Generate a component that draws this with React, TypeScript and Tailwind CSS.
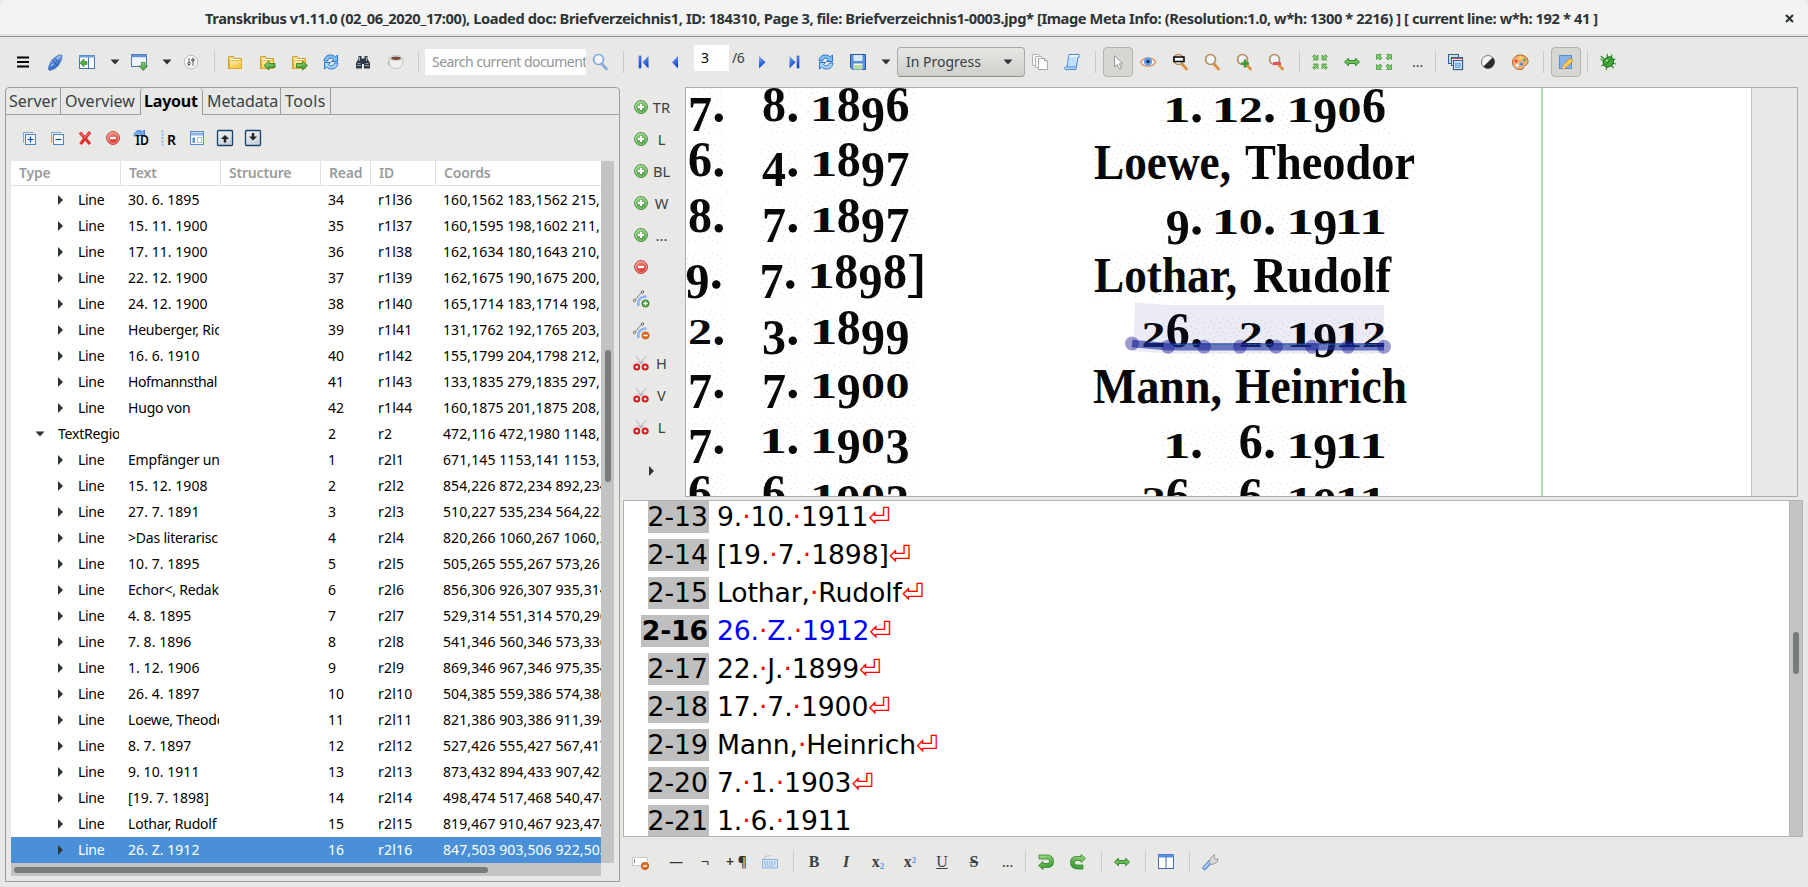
import type { ReactNode } from 'react';

const Svg = ({ children, w = 18, h = 18 }: { children: ReactNode; w?: number; h?: number }) => (
  <svg width={w} height={h} viewBox={`0 0 ${w} ${h}`} fill="none" className="block shrink-0">
    {children}
  </svg>
);

const Gradient = ({ id, from, to }: { id: string; from: string; to: string }) => (
  <linearGradient id={id} x1="0" y1="0" x2="0.4" y2="1">
    <stop offset="0" stopColor={from} />
    <stop offset="1" stopColor={to} />
  </linearGradient>
);

const Defs = () => (
  <svg width="0" height="0" className="absolute">
    <defs>
      <Gradient id="green" from="#a6dd8e" to="#3f9a36" />
      <Gradient id="red" from="#f79a8c" to="#d8342c" />
      <Gradient id="blue" from="#9cc4f5" to="#2a5fc4" />
      <Gradient id="nav" from="#7fb0ff" to="#0a3fd0" />
      <Gradient id="folder" from="#fff3b8" to="#f2c53d" />
      <Gradient id="pane" from="#ffffff" to="#b9d3f2" />
      <Gradient id="box" from="#f4f4f4" to="#c9d3de" />
    </defs>
  </svg>
);

const Sep = () => <div className="h-[22px] w-px shrink-0 bg-[#c9c9c6]" />;
const Caret = () => (
  <Svg w={10} h={6}>
    <path d="M0.5 0.5h9L5 5.5z" fill="#2e3436" />
  </Svg>
);
const Burger = () => (
  <Svg>
    <path d="M3 4.500h12M3 9h12M3 13.500h12" stroke="#000" strokeWidth="2.200" />
  </Svg>
);
const Plug = () => (
  <Svg>
    <path d="M2 16l2.500-7 3-3.500 5-3.500h3.500l-.5 5-3 5.500-3.500 3-5 2z" fill="url(#blue)" stroke="#4f7fc0" strokeWidth="0.8" />
    <path d="M6 6.500l5.500 6M8.500 5l5 5" stroke="#2c5a98" />
    <path d="M11 6l3.500-3M5 13l2-2" stroke="#cfe2fb" />
  </Svg>
);
const PanelLeft = () => (
  <Svg>
    <rect x="1.5" y="2.500" width="15" height="13" fill="#f7fafe" stroke="#4678b4" />
    <path d="M1 3.500h16" stroke="#6fa0dc" strokeWidth="2" />
    <path d="M10.500 4v12" stroke="#4678b4" />
    <path d="M2 10l4-4v2.500h3v3H6V14z" fill="#4caf3e" stroke="#2b7d22" strokeWidth="0.6" />
  </Svg>
);
const WindowDown = () => (
  <Svg>
    <rect x="1.500" y="1.500" width="15" height="12" fill="#eef4fc" stroke="#4678b4" />
    <path d="M1 3h16" stroke="#5f93d4" strokeWidth="2.500" />
    <path d="M11.500 9.500h3.500v3.500h2.500L13.200 17.500 9 13h2.500z" fill="url(#green)" stroke="#2b7d22" strokeWidth="0.700" />
  </Svg>
);
const Sliders = () => (
  <Svg>
    <circle cx="9" cy="9" r="6.800" fill="#f5f5f5" stroke="#bdbdbd" />
    <path d="M7 5v8M11 5v8" stroke="#666" />
    <circle cx="7" cy="10.500" r="1.200" fill="#f5f5f5" stroke="#444" />
    <circle cx="11" cy="7" r="1.200" fill="#f5f5f5" stroke="#444" />
  </Svg>
);
const FolderShape = () => (
  <>
    <path d="M2.500 3.500h5l1 2h7v10h-13z" fill="#f5dc7c" stroke="#cf9c24" />
    <path d="M3.500 7.500h12v8h-12z" fill="url(#folder)" stroke="#d9a92e" strokeWidth="0.700" />
    <path d="M5 6.500h9" stroke="#fff" />
  </>
);
const Folder = () => (
  <Svg>
    <FolderShape />
  </Svg>
);
const FolderIn = () => (
  <Svg>
    <FolderShape />
    <path d="M6 12.500L11 8v2.500h6v4H11V17z" fill="url(#green)" stroke="#2b7d22" strokeWidth="0.800" />
  </Svg>
);
const FolderOut = () => (
  <Svg>
    <FolderShape />
    <path d="M17.500 12.500L12.500 8v2.500H6.500v4h6V17z" fill="url(#green)" stroke="#2b7d22" strokeWidth="0.800" />
  </Svg>
);
const Refresh = () => (
  <Svg>
    <path d="M2 8c.5-4 3-6 6.500-6 2 0 3.500.7 4.700 2L15.500 2v6.500H9.500l2-2c-2-2.200-5.500-1.500-6 1.500z" fill="#7fc0f8" stroke="#1c68c4" strokeWidth="0.900" />
    <path d="M16 10c-.5 4-3 6-6.500 6-2 0-3.500-.7-4.700-2L2.500 16V9.500h6l-2 2c2 2.200 5.500 1.500 6-1.500z" fill="#a4d4fb" stroke="#1c68c4" strokeWidth="0.900" />
  </Svg>
);
const Binoculars = () => (
  <Svg>
    <path d="M4.500 3h3v2.500h3V3h3v3l2.500 4v5.500h-6V11H8v4.500H2V10l2.500-4z" fill="#2f3a46" />
    <path d="M3 12.500h4M11 12.500h4M5.500 4v4M12.500 4v4M3.500 10.500h3M11.500 10.500h3" stroke="#8fa4b8" />
  </Svg>
);
const Cup = () => (
  <Svg>
    <path d="M3 5.500c0 6 1 10 7 10s7-4 7-10z" fill="#efefef" stroke="#c4c4c4" />
    <path d="M4 8.500c-3-.5-3 3.500 1 4" stroke="#c9c9c9" strokeWidth="1.300" />
    <ellipse cx="10" cy="5" rx="6.500" ry="2.600" fill="#e9e4e1" stroke="#cfcac7" />
    <ellipse cx="10" cy="5.200" rx="4.800" ry="1.700" fill="#7a4a35" />
  </Svg>
);
const Lens = ({ ring, handle, children }: { ring: string; handle: string; children?: ReactNode }) => (
  <Svg>
    <path d="M11 11l4.500 5" stroke={handle} strokeWidth="2.800" strokeLinecap="round" />
    <circle cx="7.500" cy="6.500" r="5" fill="#f1f4f8" stroke={ring} strokeWidth="1.600" />
    {children}
  </Svg>
);
const First = () => (
  <Svg>
    <rect x="4" y="3" width="2" height="12" fill="url(#nav)" stroke="#1c4cc8" strokeWidth="0.600" />
    <path d="M13.500 3v12.500L7.500 9.200z" fill="url(#nav)" />
  </Svg>
);
const Prev = () => (
  <Svg>
    <path d="M12 3v12.500L6 9.200z" fill="url(#nav)" />
  </Svg>
);
const Next = () => (
  <Svg>
    <path d="M6 3v12.500l6.500-6.300z" fill="url(#nav)" />
  </Svg>
);
const Last = () => (
  <Svg>
    <rect x="12" y="3" width="2" height="12" fill="url(#nav)" stroke="#1c4cc8" strokeWidth="0.600" />
    <path d="M4.500 3v12.500l6-6.300z" fill="url(#nav)" />
  </Svg>
);
const Save = () => (
  <Svg>
    <path d="M1.500 1.500h15v15h-13l-2-2z" fill="#5b8fdc" stroke="#2a56a8" />
    <rect x="4.500" y="2" width="9" height="6" fill="#dce9fa" />
    <rect x="4.500" y="10.500" width="9" height="6" fill="#f2f7ee" />
    <path d="M5 13h8M5 15h8" stroke="#7cc04c" strokeWidth="1.200" />
  </Svg>
);
const Copy = () => (
  <Svg>
    <path d="M1.500 1.500h6l2.500 2.500v8.500H1.500z" fill="#fafafa" stroke="#b4b4b4" />
    <path d="M4.500 3.500h6L13 6v8.500H4.500z" fill="#fafafa" stroke="#b4b4b4" />
    <path d="M7.500 5.500h6L16.500 8v8.500h-9z" fill="#fff" stroke="#a8a8a8" />
    <path d="M13.500 5.500V8h3" stroke="#a8a8a8" />
  </Svg>
);
const Scroll = () => (
  <Svg>
    <path d="M6 1.500h10c1 0 1 2.500 0 2.500h-1l-2 12.500H2.500c-1.500 0-1-2.500 0-2.500H4z" fill="url(#pane)" stroke="#4a8ad4" />
    <path d="M4 14h8.500" stroke="#4a8ad4" />
    <path d="M6.500 4l-1.500 9h7L13.500 4z" fill="#bfe0fb" />
  </Svg>
);
const Cursor = () => (
  <Svg>
    <path d="M5.500 2.500v11.500l2.800-2.500 2 4.500 2-1-2-4.200H14z" fill="#fbfbfb" stroke="#9a9a9a" />
  </Svg>
);
const Eye = () => (
  <Svg>
    <path d="M1.500 9C4 4.500 14 3.500 16.500 9 14 14.500 4 14.500 1.500 9z" fill="#fff" stroke="#d9946c" strokeWidth="1.500" />
    <circle cx="9" cy="8.500" r="4" fill="#5c9ce6" />
    <circle cx="9" cy="8.500" r="1.600" fill="#0d2350" />
  </Svg>
);
const CornerArrows = ({ out }: { out?: boolean }) => (
  <Svg>
    {[0, 90, 180, 270].map((a) => (
      <g key={a} transform={`rotate(${a} 9 9)`}>
        <path
          d={out ? 'M1.500 1.500h5L5 3l2 2-2 2-2-2-1.500 1.500z' : 'M7 7H2l1.500-1.500-2-2 2-2 2 2L7 2z'}
          fill="#7cc76a"
          stroke="#3d9432"
          strokeWidth="0.700"
        />
      </g>
    ))}
  </Svg>
);
const FitWidth = () => (
  <Svg>
    <path d="M1.500 9L5.500 5v2.500h7V5l4 4-4 4v-2.500h-7V13z" fill="#6cbb5a" stroke="#2e8526" strokeWidth="0.900" />
  </Svg>
);
const Windows = () => (
  <Svg>
    <rect x="1.500" y="1.500" width="10" height="9" fill="#c8e6c0" stroke="#335f9c" />
    <rect x="4.500" y="4.500" width="11" height="8" fill="#fff" stroke="#335f9c" />
    <path d="M5 5.500h10" stroke="#d2504a" />
    <rect x="6.500" y="7.500" width="9" height="9" fill="#f4f8fd" stroke="#335f9c" strokeWidth="1.300" />
    <rect x="8.500" y="10" width="5" height="4.500" fill="#8ec2f2" stroke="#5a8cc8" strokeWidth="0.600" />
  </Svg>
);
const Contrast = () => (
  <Svg>
    <circle cx="9" cy="9" r="6.500" fill="#f4f4f4" stroke="#777" />
    <path d="M13.600 4.400A6.500 6.500 0 014.400 13.600z" fill="#2b2b2b" />
  </Svg>
);
const Palette = () => (
  <Svg>
    <path d="M9 2c5 0 8 3 8 6.500 0 4-3 3.500-4 4.500s.500 3-3 3.500C5 17 1.500 13.500 1.500 9.500S4.500 2 9 2z" fill="#f0b07a" stroke="#b5622a" />
    <circle cx="5" cy="8" r="1.500" fill="#e04432" />
    <circle cx="9.500" cy="5" r="1.500" fill="#f6e04c" />
    <circle cx="13.500" cy="7" r="1.500" fill="#58b04a" />
    <circle cx="6" cy="12.500" r="1.400" fill="#fff" />
    <circle cx="10.500" cy="11" r="1.600" fill="#4d86d8" />
  </Svg>
);
const EditPage = () => (
  <Svg>
    <rect x="2.500" y="2.500" width="12" height="13" fill="#86b4ec" stroke="#5a8cd0" />
    <path d="M5 16l1-4 7-7 3 3-7 7z" fill="#f6c95c" stroke="#b98322" strokeWidth="0.800" />
    <path d="M5 16l1-3.500 2.500 2.500z" fill="#fff" stroke="#b98322" strokeWidth="0.500" />
  </Svg>
);
const Bug = () => (
  <Svg>
    <path d="M2 3l4 4M8 1l1 4M13 1.500L12 5M16.500 6L13 7.500M17 11l-4-1M14.500 15L12 12M3 9h3M2 13l4-2M7 17l1-4M1.500 6L5 8" stroke="#2f8f2c" strokeWidth="1.200" />
    <ellipse cx="9.500" cy="9" rx="5.600" ry="4.600" transform="rotate(-45 9.500 9)" fill="#43a83c" stroke="#1f6d1d" />
    <path d="M6.500 12l6-6" stroke="#1f6d1d" />
    <circle cx="8" cy="7.500" r="1" fill="#b5e8ae" />
  </Svg>
);
const BoxSign = ({ plus }: { plus?: boolean }) => (
  <Svg>
    <path d="M3.500 13.500v-10h10" stroke="#7ea6cf" />
    <rect x="5.500" y="5.500" width="10" height="10" fill="#f2f8fe" stroke="#4f86bd" />
    <path d={plus ? 'M7.500 10.500h6M10.500 7.500v6' : 'M7.500 10.500h6'} stroke="#1c4e88" strokeWidth="1.200" />
  </Svg>
);
const RedCross = () => (
  <Svg>
    <path d="M4 3.500l10 11.500M14 3L4.500 15" stroke="#e03030" strokeWidth="3.200" />
    <path d="M4.500 4l4.500 4.500L13 4" stroke="#f48a80" strokeWidth="1" />
  </Svg>
);
const Round = ({ kind }: { kind: 'plus' | 'minus' }) => (
  <Svg>
    <circle cx="9" cy="9" r="6.400" fill={kind === 'plus' ? 'url(#green)' : 'url(#red)'} stroke={kind === 'plus' ? '#3d8f35' : '#c23a34'} />
    <circle cx="9" cy="9" r="5.400" stroke="#fff" strokeOpacity="0.450" />
    <path d={kind === 'plus' ? 'M9 6v6M6 9h6' : 'M6 9h6'} stroke="#fff" strokeWidth="2.200" />
  </Svg>
);
const LetterIcon = ({ text }: { text: 'ID' | 'R' }) => (
  <Svg>
    {text === 'ID' ? (
      <path d="M2 7c.5-4 3-6 6-5.500l2.500 1L12.500 1v5.500H7.500l1.500-2c-2-.8-3.500.5-4 2.500z" fill="#6ab0f3" stroke="#1c68c4" strokeWidth="0.700" />
    ) : (
      <path d="M2.500 1.500v15" stroke="#8ab8e4" strokeWidth="2" strokeDasharray="2 1.300" />
    )}
    <text x={text === 'ID' ? 3.500 : 7} y="15.500" fontFamily="Noto Sans, sans-serif" fontSize="14" fontWeight="600" fill="#000" textLength={text === 'ID' ? 13.500 : 9} lengthAdjust="spacingAndGlyphs">
      {text}
    </text>
  </Svg>
);
const Layout = () => (
  <Svg>
    <rect x="2.500" y="2.500" width="13" height="13" fill="#fff" stroke="#5c8cd0" />
    <path d="M3 5h12" stroke="#8db4ea" strokeWidth="3" />
    <rect x="4.500" y="8.500" width="2.500" height="5.500" fill="#5c8cd0" />
    <rect x="9.500" y="8.500" width="4" height="5" stroke="#a8c6ee" />
  </Svg>
);
const BoxArrow = ({ down }: { down?: boolean }) => (
  <Svg>
    <rect x="1.500" y="1.500" width="15" height="15" rx="1" fill="url(#box)" stroke="#16406e" strokeWidth="1.300" />
    <path
      d={down ? 'M7.800 4v3.500H5l4 4 4-4h-2.800V4z' : 'M7.800 13.500V10H5l4-4 4 4h-2.800v3.500z'}
      fill="#222"
    />
  </Svg>
);
const Curve = ({ plus }: { plus?: boolean }) => (
  <Svg>
    <path d="M6.500 16c-1-6 1-9 8-9.500" stroke="#8cb6ee" strokeWidth="2.500" />
    <path d="M3 10l7-8" stroke="#777" />
    <circle cx="2.500" cy="10.500" r="1.200" fill="#eee" stroke="#666" />
    <circle cx="10.500" cy="2" r="1.200" fill="#eee" stroke="#666" />
    <circle cx="13.500" cy="13.500" r="3.600" fill={plus ? '#4a9a2e' : '#e8681c'} stroke={plus ? '#2f6f1c' : '#b84a0c'} strokeWidth="0.700" />
    <path d={plus ? 'M13.500 11.300v4.400M11.300 13.500h4.400' : 'M11.300 13.500h4.400'} stroke="#fff" strokeWidth="1.400" />
  </Svg>
);
const Scissors = () => (
  <Svg>
    <path d="M4 2l6.500 8.500M14 2L7.500 10.500" stroke="#cdd0d1" strokeWidth="1.800" />
    <path d="M7 7.500l2 2 2-2" stroke="#999" />
    <circle cx="4.800" cy="13" r="2.500" stroke="#e3141c" strokeWidth="2" />
    <circle cx="13.200" cy="13" r="2.500" stroke="#e3141c" strokeWidth="2" />
  </Svg>
);
const FieldRemove = () => (
  <Svg>
    <rect x="1.500" y="4.500" width="15" height="8" fill="#fff" stroke="#c8c8c4" />
    <path d="M3.500 6v4" stroke="#888" />
    <circle cx="14" cy="13" r="3.700" fill="#e8681c" stroke="#b84a0c" strokeWidth="0.700" />
    <path d="M12 13h4" stroke="#fff" strokeWidth="1.400" />
  </Svg>
);
const Keyboard = () => (
  <Svg>
    <path d="M3.500 6c0-4 2-2.500 7-3.500" stroke="#c0c0c0" />
    <path d="M1.500 6.500h15v8.500h-15z" fill="#dbe8f8" stroke="#8cb0e0" />
    <path d="M3 9h12M3 11h12M4 13h10" stroke="#6f98d0" strokeDasharray="1.500 1" />
  </Svg>
);
const UndoRedo = ({ flip }: { flip?: boolean }) => (
  <Svg>
    <g transform={flip ? 'matrix(-1 0 0 1 18 0)' : undefined}>
      <path
        d={flip ? 'M6 1.500v2h4c5 0 6.500 2.500 6.500 6s-2 6.500-7 6.500H4v-4h6c2 0 2.500-1 2.500-2.300S12 7.500 10 7.500H6v2L1.500 5.500z' : 'M6 16.500v-2h4c5 0 6.500-2.500 6.500-6S14.500 2 9.500 2H2v4h8c2 0 2.500 1 2.500 2.300S12 10.500 10 10.500H6v-2L1.500 12.500z'}
        fill="url(#green)"
        stroke="#2e8526"
        strokeWidth="0.800"
      />
    </g>
  </Svg>
);
const TwoColumns = () => (
  <Svg>
    <rect x="1.500" y="1.500" width="15" height="14" fill="#fff" stroke="#3f6db4" />
    <path d="M1 3h16" stroke="#5b8fdc" strokeWidth="3" />
    <path d="M9 3v13" stroke="#3f6db4" />
  </Svg>
);
const Wrench = () => (
  <Svg>
    <path d="M3.500 15l5.500-6" stroke="#5c8cdc" strokeWidth="4.400" strokeLinecap="round" />
    <path d="M3.500 14.800l5-5.400" stroke="#b4d0f8" strokeWidth="2" strokeLinecap="round" />
    <path d="M8 9.500l2-5 3.500-3-.5 3.500 2 1.500 2-1-.8 3.500-4 2-1.800.5z" fill="#d9d9d9" stroke="#8a8a8a" strokeWidth="0.800" />
  </Svg>
);
const Amber = ({ children }: { children?: ReactNode }) => (
  <Lens ring="#b58a5c" handle="#d8923c">
    {children}
  </Lens>
);

type Entry = [string, string, string, string, 'open'?];
const entries: Entry[] = [
  ['30. 6. 1895', '34', 'r1l36', '160,1562 183,1562 215,1562'],
  ['15. 11. 1900', '35', 'r1l37', '160,1595 198,1602 211,1602'],
  ['17. 11. 1900', '36', 'r1l38', '162,1634 180,1643 210,1643'],
  ['22. 12. 1900', '37', 'r1l39', '162,1675 190,1675 200,1675'],
  ['24. 12. 1900', '38', 'r1l40', '165,1714 183,1714 198,1714'],
  ['Heuberger, Richard', '39', 'r1l41', '131,1762 192,1765 203,1765'],
  ['16. 6. 1910', '40', 'r1l42', '155,1799 204,1798 212,1798'],
  ['Hofmannsthal', '41', 'r1l43', '133,1835 279,1835 297,1835'],
  ['Hugo von', '42', 'r1l44', '160,1875 201,1875 208,1875'],
  ['', '2', 'r2', '472,116 472,1980 1148,1980', 'open'],
  ['Empfänger und', '1', 'r2l1', '671,145 1153,141 1153,141'],
  ['15. 12. 1908', '2', 'r2l2', '854,226 872,234 892,234'],
  ['27. 7. 1891', '3', 'r2l3', '510,227 535,234 564,222'],
  ['>Das literarisc', '4', 'r2l4', '820,266 1060,267 1060,267'],
  ['10. 7. 1895', '5', 'r2l5', '505,265 555,267 573,261'],
  ['Echor<, Redak', '6', 'r2l6', '856,306 926,307 935,314'],
  ['4. 8. 1895', '7', 'r2l7', '529,314 551,314 570,296'],
  ['7. 8. 1896', '8', 'r2l8', '541,346 560,346 573,336'],
  ['1. 12. 1906', '9', 'r2l9', '869,346 967,346 975,354'],
  ['26. 4. 1897', '10', 'r2l10', '504,385 559,386 574,386'],
  ['Loewe, Theodor', '11', 'r2l11', '821,386 903,386 911,394'],
  ['8. 7. 1897', '12', 'r2l12', '527,426 555,427 567,417'],
  ['9. 10. 1911', '13', 'r2l13', '873,432 894,433 907,423'],
  ['[19. 7. 1898]', '14', 'r2l14', '498,474 517,468 540,474'],
  ['Lothar, Rudolf', '15', 'r2l15', '819,467 910,467 923,474'],
  ['26. Z. 1912', '16', 'r2l16', '847,503 903,506 922,503'],
];
const columns = 'grid grid-cols-[110px_100px_100px_50px_65px_165px]';

const textSpacing = (text: string) => {
  if (text === 'Hofmannsthal') return 'tracking-[-0.4px]';
  if (/[a-z]{3}/.test(text)) return 'tracking-[-0.2px]';
  return 'tracking-[0.06px]';
};

const Row = ({ entry, selected }: { entry: Entry; selected: boolean }) => {
  const [text, read, id, coords, open] = entry;
  return (
    <div className={`${columns} h-[26px] items-center text-sm leading-[26px] ${selected ? 'bg-[#4a90d9] text-white' : 'text-black'}`}>
      {open ? (
        <div className="mr-0.5 flex items-center overflow-hidden pl-6">
          <Caret />
          <span className="pl-[13px] tracking-[-0.2px]">TextRegion</span>
        </div>
      ) : (
        <div className="flex items-center pl-[47px]">
          <Svg w={5} h={10}>
            <path d="M0 0l5 5-5 5z" fill="#2e3436" />
          </Svg>
          <span className="pl-[15px] tracking-[-0.3px]">Line</span>
        </div>
      )}
      <div className={`ml-[7px] mr-0.5 overflow-hidden whitespace-nowrap ${textSpacing(text)}`}>{text}</div>
      <div />
      <div className="pl-[7px]">{read}</div>
      <div className="pl-[7px] tracking-[0.2px]">{id}</div>
      <div className="overflow-hidden whitespace-nowrap pl-[7px] tracking-[0.1px]">{coords}</div>
    </div>
  );
};

const Tree = () => (
  <div className="ml-[5px] mt-[24px] grid w-[603px] grid-cols-[590px_13px] grid-rows-[702px_13px]">
    <div className="overflow-hidden bg-white">
      <div className={`${columns} mb-px h-[25px] border-b border-[#e0e0de] text-sm font-semibold leading-[24px] text-[#9a9c9c]`}>
        {['Type', 'Text', 'Structure', 'Read', 'ID', 'Coords'].map((name) => (
          <div key={name} className="border-r border-[#e0e0de] pl-2 tracking-[-0.2px] last:border-r-0">
            {name}
          </div>
        ))}
      </div>
      {entries.map((entry, i) => (
        <Row key={entry[2]} entry={entry} selected={i === entries.length - 1} />
      ))}
    </div>
    <div className="bg-[#c2c4c3] pl-1 pt-[189px]">
      <div className="h-[132px] w-1.5 rounded-full bg-[#777b7a]" />
    </div>
    <div className="bg-[#c2c4c3] pl-[3px] pt-1">
      <div className="h-1.5 w-[474px] rounded-full bg-[#777b7a]" />
    </div>
  </div>
);

const Sidebar = () => (
  <section className="ml-[5px] h-[795px] w-[615px] shrink-0 rounded-t border border-[#9d9f9b]">
    <nav className="flex h-[27px] text-base leading-[26px] text-[#3a4042]">
      <div className="w-[55px] border-b border-r border-[#9d9f9b] pl-[3px]">Server</div>
      <div className="w-[79px] border-b border-[#9d9f9b] pl-1">Overview</div>
      <div className="w-[63px] rounded-t border-x border-[#9d9f9b] pl-[3px] font-bold tracking-[-0.2px] text-black">Layout</div>
      <div className="w-[78px] border-b border-r border-[#9d9f9b] pl-1 tracking-[-0.1px]">Metadata</div>
      <div className="w-[50px] border-b border-r border-[#9d9f9b] pl-1 tracking-[0.4px]">Tools</div>
      <div className="flex-1 border-b border-[#9d9f9b]" />
    </nav>
    <div className="mt-[14px] flex h-[18px] gap-[10px] pl-[14px]">
      <BoxSign plus />
      <BoxSign />
      <RedCross />
      <Round kind="minus" />
      <LetterIcon text="ID" />
      <LetterIcon text="R" />
      <Layout />
      <BoxArrow />
      <BoxArrow down />
    </div>
    <div className="-mt-[10px]">
      <Tree />
    </div>
  </section>
);

const MainToolbar = () => (
  <div className="flex h-[50px] shrink-0 items-center pl-[14px] text-sm text-[#3a4042]">
    <div className="flex items-center gap-[14px]">
      <Burger />
      <Plug />
      <PanelLeft />
      <Caret />
    </div>
    <div className="ml-[10px] flex items-center gap-[14px]">
      <WindowDown />
      <Caret />
    </div>
    <div className="ml-[10px] flex items-center gap-[14px]">
      <Sliders />
      <Sep />
    </div>
    <div className="ml-[11px] flex items-center gap-[14px]">
      <Folder />
      <FolderIn />
      <FolderOut />
      <Refresh />
      <Binoculars />
      <Cup />
      <Sep />
    </div>
    <div className="ml-[6px] h-[26px] w-[161px] overflow-hidden whitespace-nowrap bg-white pl-[7px] leading-[25px] tracking-[-0.53px] text-[#929595]">Search current document...</div>
    <div className="ml-[5px] flex items-center gap-[14px]">
      <Lens ring="#7ba7dc" handle="#8aaede" />
      <Sep />
    </div>
    <div className="ml-[11px] flex items-center gap-[13px]">
      <First />
      <Prev />
    </div>
    <div className="mb-2 ml-[10px] h-[26px] w-[35px] bg-white pl-[7px] leading-[25px] text-black">3</div>
    <div className="mb-2 ml-[3px] w-3 leading-[26px] tracking-[-0.4px]">/6</div>
    <div className="ml-[9px] flex items-center gap-[14px]">
      <Next />
      <Last />
      <Refresh />
      <Save />
      <Caret />
    </div>
    <div className="ml-[6px] flex h-[30px] w-[128px] items-center justify-between rounded border border-[#a9aaa7] border-b-[#8e8f8c] bg-linear-to-b from-[#e6e6e4] to-[#cfcfcc] pl-2 pr-[11px]">
      <span>In Progress</span>
      <Caret />
    </div>
    <div className="ml-[6px] flex items-center gap-[14px]">
      <Copy />
      <Scroll />
      <Sep />
    </div>
    <div className="ml-[7px] flex h-[30px] w-[30px] items-center justify-center rounded border border-[#b4b4b1] bg-[#d6d6d3]">
      <Cursor />
    </div>
    <div className="ml-[6px] flex items-center gap-[14px]">
      <Eye />
      <Amber>
        <rect x="3" y="4" width="10" height="4.500" fill="#fff" fillOpacity="0.600" stroke="#000" strokeWidth="1.500" />
      </Amber>
      <Amber />
      <Amber>
        <path d="M10 6.500v8M6 10.500h8" stroke="#3f9a36" strokeWidth="2.600" />
      </Amber>
      <Amber>
        <path d="M6 10.500h8" stroke="#e8505a" strokeWidth="3" />
      </Amber>
      <Sep />
    </div>
    <div className="ml-[11px] flex items-center gap-[14px]">
      <CornerArrows />
      <FitWidth />
      <CornerArrows out />
    </div>
    <div className="ml-[19px] w-[13px]">...</div>
    <div className="ml-[10px] flex items-center gap-[11px]">
      <Sep />
      <div className="flex items-center gap-[14px]">
        <Windows />
        <Contrast />
        <Palette />
        <Sep />
      </div>
    </div>
    <div className="ml-[7px] flex h-[30px] w-[30px] items-center justify-center rounded border border-[#b4b4b1] bg-[#d6d6d3]">
      <EditPage />
    </div>
    <div className="ml-[6px] flex items-center gap-[11px]">
      <Sep />
      <Bug />
    </div>
  </div>
);

const ShapeTools = () => {
  const tools: [ReactNode, string][] = [
    [<Round kind="plus" />, 'TR'],
    [<Round kind="plus" />, 'L'],
    [<Round kind="plus" />, 'BL'],
    [<Round kind="plus" />, 'W'],
    [<Round kind="plus" />, '...'],
    [<Round kind="minus" />, ''],
    [<Curve plus />, ''],
    [<Curve />, ''],
    [<Scissors />, 'H'],
    [<Scissors />, 'V'],
    [<Scissors />, 'L'],
  ];
  return (
    <div className="flex w-[65px] shrink-0 flex-col pl-3 pt-1">
      {tools.map(([icon, label], i) => (
        <div key={i} className="flex h-8 items-center text-[14.67px] text-[#3a4042]">
          {icon}
          <span className="w-[23px] text-center">{label}</span>
        </div>
      ))}
      <div className="pl-[17px] pt-[23px]">
        <Svg w={5} h={10}>
          <path d="M0 0l5 5-5 5z" fill="#2e3436" />
        </Svg>
      </div>
    </div>
  );
};

/* Old-style numerals: 0, 1, 2 sit at x-height, 3, 4, 5, 7, 9 descend. */
const Numeral = ({ c, x, y }: { c: string; x: number; y: number }) => {
  if (c === '.') return <circle cx={x + 4.500} cy={y - 3.500} r="4.200" />;
  if (c === ']') return <path d={`M${x + 1} ${y - 34}h13v44h-14v-3h8.500v-38.500h-7.500z`} />;
  const small = '012'.includes(c);
  const low = '34579'.includes(c);
  const wide = c === '1';
  return (
    <text
      x={wide ? x - 4 : x - 1}
      y={low ? y + 10 : y}
      fontSize={small ? 35.500 : 50}
      textLength={wide ? 28 : 24}
      lengthAdjust="spacingAndGlyphs"
    >
      {c}
    </text>
  );
};
const Numerals = ({ text, x, y }: { text: string; x: number; y: number }) => (
  <>
    {[...text].map((c, i) => (c === ' ' ? null : <Numeral key={i} c={c} x={x + i * 24.300 + (c === '.' ? 1 : 0)} y={y} />))}
  </>
);
const leftRows: [number, number, string, string, string][] = [
  [689, 121.300, '7.', '8.', '1896'],
  [689, 176, '6.', '4.', '1897'],
  [689, 231.700, '8.', '7.', '1897'],
  [686.500, 288, '9.', '7.', '1898]'],
  [689, 344.300, '2.', '3.', '1899'],
  [689, 397.500, '7.', '7.', '1900'],
  [689, 453.300, '7.', '1.', '1903'],
  [689, 509, '6.', '6.', '1903'],
];
const rightRows: [number, string, string, string][] = [
  [121.700, ' 1.', '12.', '1906'],
  [234, ' 9.', '10.', '1911'],
  [346.700, '26.', ' 2.', '1912'],
  [457.500, ' 1.', ' 6.', '1911'],
  [512, '26.', ' 6.', '1911'],
];
const words: [number, number, number, string][] = [
  [1094, 179.300, 137, 'Loewe,'],
  [1245, 179.300, 170, 'Theodor'],
  [1094, 291.700, 143, 'Lothar,'],
  [1253, 291.700, 138, 'Rudolf'],
  [1093, 402.700, 129, 'Mann,'],
  [1235, 402.700, 172, 'Heinrich'],
];
const handles = [1132, 1168, 1204, 1240, 1276, 1312, 1348, 1384];

const Scan = () => (
  <svg width="1065" height="408" viewBox="686 88 1065 408" className="block shrink-0 bg-white">
    <defs>
      <pattern id="grain" width="17" height="13" patternUnits="userSpaceOnUse">
        <path d="M1 1h1v1h-1zM6 3h1v1h-1zM12 2h1v1h-1zM15 6h1v1h-1zM3 8h1v1h-1zM9 7h1v1h-1zM7 11h1v1h-1zM13 10h1v1h-1z" fill="#dedede" />
      </pattern>
    </defs>
    {leftRows.map(([x, y], i) => (
      <g key={i} fill="url(#grain)">
        <rect x={x} y={y - 36} width="37" height="48" />
        <rect x={x + 72} y={y - 36} width="40" height="48" />
        <rect x={x + 118} y={y - 36} width="108" height="48" />
      </g>
    ))}
    {rightRows.map(([y], i) => (
      <rect key={i} x="1162" y={y - 30} width="228" height="42" fill="url(#grain)" />
    ))}
    {words.map(([x, y, w], i) => (
      <rect key={i} x={x} y={y - 38} width={w} height="44" fill="url(#grain)" />
    ))}
    <g fill="#080808" fontFamily="'Liberation Serif', serif" fontWeight="700">
      {leftRows.map(([x, y, day, month, year], i) => (
        <g key={i}>
          <Numerals text={day} x={x} y={y} />
          <Numerals text={month} x={x + 74} y={y} />
          <Numerals text={year} x={x + 124.500} y={y} />
        </g>
      ))}
      {rightRows.map(([y, day, month, year], i) => (
        <g key={i}>
          <Numerals text={day} x={1142.500} y={y} />
          <Numerals text={month} x={1215.500} y={y} />
          <Numerals text={year} x={1290} y={y} />
        </g>
      ))}
      {words.map(([x, y, w, word], i) => (
        <text key={i} x={x} y={y} fontSize="50" textLength={w} lengthAdjust="spacingAndGlyphs">
          {word}
        </text>
      ))}
    </g>
    <path d="M1135 302.500L1168 305h216v48.500h-216L1133 351z" fill="#000080" fillOpacity="0.080" />
    <path d="M1132 343.500L1168 346.700H1384" stroke="#1c2f9e" strokeOpacity="0.620" strokeWidth="7.500" fill="none" />
    <path d="M1168 344.500H1384" stroke="#2a6fa8" strokeOpacity="0.700" strokeDasharray="4 1" />
    {handles.map((x) => (
      <circle key={x} cx={x} cy={x === 1132 ? 343.500 : 346.700} r="7" fill="#10108c" fillOpacity="0.420" />
    ))}
    <path d="M1542 88v408" stroke="#b4dab0" strokeWidth="2" />
  </svg>
);

const transcript: [string, string, boolean?][] = [
  ['2-13', '9. 10. 1911'],
  ['2-14', '[19. 7. 1898]'],
  ['2-15', 'Lothar, Rudolf'],
  ['2-16', '26. Z. 1912'],
  ['2-17', '22. J. 1899'],
  ['2-18', '17. 7. 1900'],
  ['2-19', 'Mann, Heinrich'],
  ['2-20', '7. 1. 1903'],
  ['2-21', '1. 6. 1911', true],
];

const Transcript = () => (
  <div className="mt-[3px] flex h-[337px] w-[1180px] border border-[#b2b3af] bg-white font-['DejaVu_Sans',sans-serif] text-[26.67px]">
    <div className="flex-1 overflow-hidden">
      {transcript.map(([label, text, last]) => {
        const current = label === '2-16';
        return (
          <div key={label} className="flex h-[38px] items-start whitespace-pre leading-[32px]">
            <div className="flex w-[85px] justify-end">
              <span className={current ? 'h-8 bg-[#bfbfbf] px-px font-bold tracking-[-0.1px] text-black' : 'h-8 bg-[#bfbfbf] pr-px text-black'}>{label}</span>
            </div>
            <div className={current ? 'pl-2 tracking-[-0.15px] text-[#0000ff]' : 'pl-2 tracking-[-0.13px] text-black'}>
              {text.split(' ').map((part, i) => (
                <span key={i}>
                  {i > 0 && <span className="text-[#ff0000]">·</span>}
                  {part}
                </span>
              ))}
              {!last && <span className="text-[#ff0000]">⏎</span>}
            </div>
          </div>
        );
      })}
    </div>
    <div className="w-[13px] border-l border-[#b2b3af] bg-[#c2c4c3] pl-[3px] pt-[131px]">
      <div className="h-[42px] w-1.5 rounded-full bg-[#777b7a]" />
    </div>
  </div>
);

const Glyph = ({ children }: { children: ReactNode }) => (
  <div className="w-[18px] text-center font-['Liberation_Serif',serif] text-[16px] leading-[18px] text-[#3a4042]">{children}</div>
);

const EditToolbar = () => (
  <div className="flex h-[50px] items-center pl-2 text-sm text-[#2e3436]">
    <FieldRemove />
    <div className="ml-[18px] w-[18px] text-center">—</div>
    <div className="ml-[11px] w-[18px] text-center">¬</div>
    <div className="ml-[12px] w-6 whitespace-nowrap font-semibold">+ ¶</div>
    <div className="ml-[11px] flex items-center gap-[14px]">
      <Keyboard />
      <Sep />
    </div>
    <div className="ml-[11px] flex items-center gap-[14px]">
      <Glyph><b>B</b></Glyph>
      <Glyph><i className="font-semibold">I</i></Glyph>
      <Glyph>
        <b>x</b>
        <sub className="text-[9px] font-bold text-[#5c96dc]">2</sub>
      </Glyph>
      <Glyph>
        <b>x</b>
        <sup className="text-[9px] font-bold text-[#5c96dc]">2</sup>
      </Glyph>
      <Glyph><u>U</u></Glyph>
      <Glyph><s className="font-bold">S</s></Glyph>
    </div>
    <div className="ml-[19px] w-[15px]">...</div>
    <div className="ml-2 flex items-center gap-[11px]">
      <Sep />
      <div className="flex items-center gap-[14px]">
        <UndoRedo />
        <UndoRedo flip />
        <Sep />
      </div>
      <div className="flex items-center gap-[14px]">
        <FitWidth />
        <Sep />
      </div>
      <div className="flex items-center gap-[14px]">
        <TwoColumns />
        <Sep />
      </div>
      <Wrench />
    </div>
  </div>
);

export default function App() {
  return (
    <div className="flex h-[887px] w-[1808px] flex-col overflow-hidden bg-[#e8e8e6] font-['Noto_Sans',sans-serif]">
      <Defs />
      <header className="flex h-[37px] shrink-0 items-center rounded-t-lg border-b border-[#8f908c] bg-[#f3f3f3] shadow-[inset_0_-2px_0_#e4e4e2]">
        <h1 className="w-[1780px] whitespace-nowrap pl-[205px] text-[14.67px] font-bold tracking-[-0.4px] text-[#2e3436]">
          Transkribus v1.11.0 (02_06_2020_17:00), Loaded doc: Briefverzeichnis1, ID: 184310, Page 3, file: Briefverzeichnis1-0003.jpg* [Image Meta Info: (Resolution:1.0, w*h: 1300 * 2216) ] [ current line: w*h: 192 * 41 ]
        </h1>
        <div className="pl-[5px]">
          <Svg w={9} h={9}>
            <path d="M1 1l7 7M8 1L1 8" stroke="#2e3436" strokeWidth="2.200" />
          </Svg>
        </div>
      </header>
      <MainToolbar />
      <main className="flex flex-1">
        <Sidebar />
        <section className="flex flex-col pl-[3px]">
          <div className="-ml-[3px] flex">
            <ShapeTools />
            <div className="flex h-[410px] w-[1113px] border border-[#adaeaa]">
              <Scan />
              <div className="flex-1 border-l border-[#c2c2bf]" />
            </div>
          </div>
          <Transcript />
          <EditToolbar />
        </section>
      </main>
    </div>
  );
}
